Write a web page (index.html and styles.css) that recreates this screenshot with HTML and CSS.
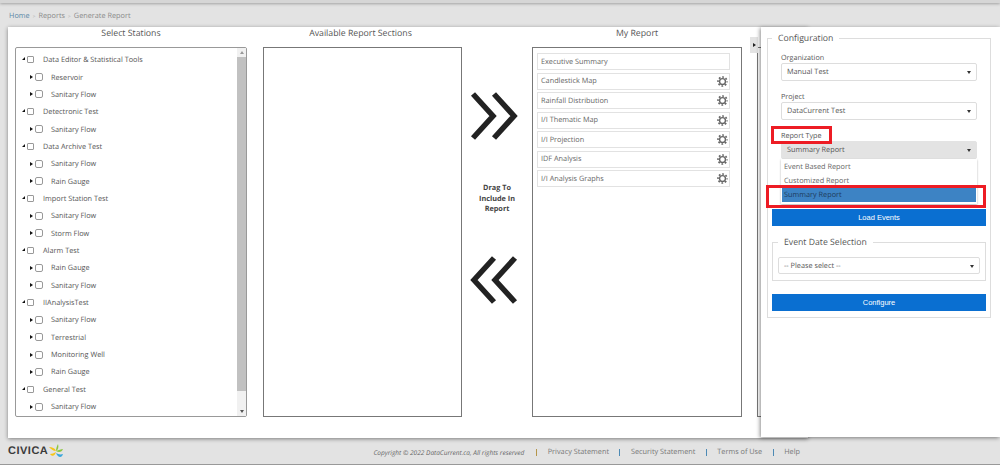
FILE: index.html
```html
<!DOCTYPE html>
<html lang="en">
<head>
    <meta charset="UTF-8">
    <title>Generate Report</title>
    <link rel="stylesheet" href="styles.css">
</head>
<body>
    <div class="topbar"></div>
    <div class="breadcrumb">
        <a class="crumb-home">Home</a><span class="sep">&gt;</span><span>Reports</span><span class="sep">&gt;</span><span>Generate Report</span>
    </div>

    <div class="card">
        <div class="col col-stations">
            <h3>Select Stations</h3>
            <div class="box tree">
                <div class="tree-list">
                    <div class="node root"><i class="arrow open"></i><i class="check"></i><span>Data Editor &amp; Statistical Tools</span></div>
                    <div class="node"><i class="arrow"></i><i class="check"></i><span>Reservoir</span></div>
                    <div class="node"><i class="arrow"></i><i class="check"></i><span>Sanitary Flow</span></div>
                    <div class="node root"><i class="arrow open"></i><i class="check"></i><span>Detectronic Test</span></div>
                    <div class="node"><i class="arrow"></i><i class="check"></i><span>Sanitary Flow</span></div>
                    <div class="node root"><i class="arrow open"></i><i class="check"></i><span>Data Archive Test</span></div>
                    <div class="node"><i class="arrow"></i><i class="check"></i><span>Sanitary Flow</span></div>
                    <div class="node"><i class="arrow"></i><i class="check"></i><span>Rain Gauge</span></div>
                    <div class="node root"><i class="arrow open"></i><i class="check"></i><span>Import Station Test</span></div>
                    <div class="node"><i class="arrow"></i><i class="check"></i><span>Sanitary Flow</span></div>
                    <div class="node"><i class="arrow"></i><i class="check"></i><span>Storm Flow</span></div>
                    <div class="node root"><i class="arrow open"></i><i class="check"></i><span>Alarm Test</span></div>
                    <div class="node"><i class="arrow"></i><i class="check"></i><span>Rain Gauge</span></div>
                    <div class="node"><i class="arrow"></i><i class="check"></i><span>Sanitary Flow</span></div>
                    <div class="node root"><i class="arrow open"></i><i class="check"></i><span>IIAnalysisTest</span></div>
                    <div class="node"><i class="arrow"></i><i class="check"></i><span>Sanitary Flow</span></div>
                    <div class="node"><i class="arrow"></i><i class="check"></i><span>Terrestrial</span></div>
                    <div class="node"><i class="arrow"></i><i class="check"></i><span>Monitoring Well</span></div>
                    <div class="node"><i class="arrow"></i><i class="check"></i><span>Rain Gauge</span></div>
                    <div class="node root"><i class="arrow open"></i><i class="check"></i><span>General Test</span></div>
                    <div class="node"><i class="arrow"></i><i class="check"></i><span>Sanitary Flow</span></div>
                </div>
                <div class="scrollbar">
                    <i class="scroll-up"></i>
                    <div class="scroll-thumb"></div>
                    <i class="scroll-down"></i>
                </div>
            </div>
        </div>

        <div class="col col-available">
            <h3>Available Report Sections</h3>
            <div class="box"></div>
        </div>

        <div class="col-drag">
            <svg class="chevrons" viewBox="0 0 50 50"><path d="M4 3 L24 25 L4 47 M25 3 L45 25 L25 47"/></svg>
            <div class="drag-text">Drag To<br>Include In<br>Report</div>
            <svg class="chevrons" viewBox="0 0 50 50"><path d="M25 3 L5 25 L25 47 M46 3 L26 25 L46 47"/></svg>
        </div>

        <div class="col col-report">
            <h3>My Report</h3>
            <div class="box report-list">
                <div class="section-row">Executive Summary</div>
                <div class="section-row">Candlestick Map<svg class="gear"><use href="#gear"/></svg></div>
                <div class="section-row">Rainfall Distribution<svg class="gear"><use href="#gear"/></svg></div>
                <div class="section-row">I/I Thematic Map<svg class="gear"><use href="#gear"/></svg></div>
                <div class="section-row">I/I Projection<svg class="gear"><use href="#gear"/></svg></div>
                <div class="section-row">IDF Analysis<svg class="gear"><use href="#gear"/></svg></div>
                <div class="section-row">I/I Analysis Graphs<svg class="gear"><use href="#gear"/></svg></div>
            </div>
        </div>

        <div class="col-hidden">
            <div class="toggle"><i class="toggle-arrow"></i></div>
            <div class="box"></div>
        </div>
    </div>

    <aside class="panel">
        <fieldset class="config">
            <legend>Configuration</legend>
            <label>Organization</label>
            <div class="select">Manual Test<i></i></div>
            <label>Project</label>
            <div class="select">DataCurrent Test<i></i></div>
            <label>Report Type</label>
            <div class="select open">Summary Report<i></i></div>
            <button class="btn load-btn">Load Events</button>
            <fieldset class="events">
                <legend>Event Date Selection</legend>
                <div class="select">-- Please select --<i></i></div>
            </fieldset>
            <button class="btn">Configure</button>

            <div class="dropdown">
                <div>Event Based Report</div>
                <div>Customized Report</div>
                <div class="selected">Summary Report</div>
            </div>
        </fieldset>
        <div class="mark mark-label"></div>
        <div class="mark mark-option"></div>
    </aside>

    <footer class="footer">
        <div class="logo">
            <span>CIVICA</span>
            <svg class="logo-mark" viewBox="0 0 14 14">
                <path d="M7 7 C7 4 8 2 9 0 C10 3 9 6 7 7Z" fill="#8cc63f"/>
                <path d="M7 7 C4 7 2 5 0 3 C3 3 6 4 7 7Z" fill="#f5c518"/>
                <path d="M7 7 C10 6 12 5 14 5 C13 8 10 9 7 7Z" fill="#8cc63f"/>
                <path d="M7 8 C5 9 3 10 1 10 C3 13 6 12 7 8Z" fill="#f5c518"/>
                <path d="M7 9 C9 10 11 11 14 10 C13 14 9 14 7 9Z" fill="#3aa7dc"/>
            </svg>
        </div>
        <div class="footer-links">
            <em>Copyright &copy; 2022 DataCurrent.ca, All rights reserved</em>
            <i class="bar bar-gold"></i><a>Privacy Statement</a>
            <i class="bar bar-blue"></i><a>Security Statement</a>
            <i class="bar bar-blue"></i><a>Terms of Use</a>
            <i class="bar bar-blue"></i><a>Help</a>
        </div>
    </footer>

    <svg class="defs" width="0" height="0">
        <symbol id="gear" viewBox="0 0 24 24">
            <circle cx="12" cy="12" r="9.8" fill="none" stroke="#666" stroke-width="3.4" stroke-dasharray="3.85 3.85" stroke-dashoffset="1.92"/>
            <circle cx="12" cy="12" r="6.4" fill="none" stroke="#666" stroke-width="3"/>
        </symbol>
    </svg>
</body>
</html>
```
FILE: styles.css
```css
* { box-sizing: border-box; }

html, body {
    margin: 0;
    height: 465px;
    overflow: hidden;
}
body {
    position: relative;
    background: #e3e3e3;
    font-family: "Open Sans", Arial, sans-serif;
    font-size: 7.3px;
    color: #555;
    text-rendering: geometricPrecision;
}

.topbar {
    height: 3px;
    background: #d6d6d6;
    box-shadow: 0 1px 3px rgba(0,0,0,0.3);
}
.breadcrumb {
    height: 24px;
    padding: 8px 0 0 9px;
    font-size: 7.3px;
    line-height: 11px;
    color: #8a8a8a;
}
.crumb-home { color: #5b88a8; }
.sep { margin: 0 3px; font-size: 5px; color: #aaa; }

.card {
    display: flex;
    width: 800px;
    height: 411px;
    margin-left: 8px;
    padding: 0 0 0 7px;
    background: #fff;
    box-shadow: 0 1px 4px rgba(0,0,0,0.45);
    overflow: hidden;
}
.col { display: flex; flex-direction: column; }
.col h3 {
    height: 20px;
    margin: 0;
    font-size: 8.75px;
    font-weight: 400;
    line-height: 12px;
    text-align: center;
    color: #555;
}
.box {
    height: 370px;
    border: 1px solid #777;
    background: #fff;
}
.col-stations { width: 232px; margin-right: 16px; }
.col-available { width: 199px; }
.col-available h3 { padding-right: 4px; }
.col-report { width: 210px; }

.tree {
    display: flex;
    border-color: #999;
    border-radius: 2px;
}
.tree-list { flex: 1; padding-top: 3px; }
.node {
    display: flex;
    align-items: center;
    height: 17.35px;
    padding-left: 14px;
    font-size: 7.3px;
    color: #555;
}
.node span { padding-top: 1px; }
.node.root { padding-left: 6px; }
.node .check {
    width: 8px;
    height: 8px;
    margin: 0 8px 0 2px;
    border: 1px solid #999;
    border-radius: 2px;
    background: #fff;
}
.node.root .check { width: 7px; height: 7px; margin-right: 9px; border-radius: 1px; }

.arrow {
    width: 0;
    height: 0;
    border-left: 3px solid #111;
    border-top: 2px solid transparent;
    border-bottom: 2px solid transparent;
}
.arrow.open {
    border-left: 3px solid transparent;
    border-top: 0;
    border-bottom: 3px solid #111;
    margin-top: -2px;
}

.scrollbar {
    display: flex;
    flex-direction: column;
    align-items: center;
    width: 9px;
    background: #f1f1f1;
}
.scroll-up, .scroll-down {
    flex: none;
    width: 0;
    height: 0;
    margin: 3px 0;
    border-left: 2.5px solid transparent;
    border-right: 2.5px solid transparent;
}
.scroll-up { border-bottom: 3px solid #999; }
.scroll-down { border-top: 3px solid #555; }
.scroll-thumb { flex: 1; width: 100%; margin-bottom: 16px; background: #c1c1c1; }

.col-drag {
    display: flex;
    flex-direction: column;
    align-items: center;
    width: 70px;
    padding-top: 64px;
}
.chevrons { width: 50px; height: 50px; margin-left: -6px; }
.chevrons path { fill: none; stroke: #222; stroke-width: 5.5; }
.drag-text {
    margin: 42px 0 40px;
    font-size: 7.3px;
    font-weight: 700;
    line-height: 10.5px;
    text-align: center;
    color: #444;
}

.report-list { padding: 5px 11px 0 4px; }
.section-row {
    display: flex;
    align-items: center;
    justify-content: space-between;
    height: 17px;
    margin-bottom: 2.5px;
    padding: 0 0 0 3px;
    border: 1px solid #e2e2e2;
    font-size: 7.3px;
    color: #666;
}
.gear { width: 11px; height: 11px; margin-right: 1px; }
.defs { position: absolute; }

.col-hidden { margin-left: 15px; padding-top: 20px; position: relative; flex: 1; }
.col-hidden .box { width: 40px; }
.toggle {
    position: absolute;
    left: -7px;
    top: 10px;
    width: 8px;
    height: 16px;
    background: #e3e3e3;
}
.toggle-arrow {
    position: absolute;
    left: 3px;
    top: 6px;
    border-left: 3px solid #222;
    border-top: 2px solid transparent;
    border-bottom: 2px solid transparent;
}

/* slide out panel sits over the card */
.panel {
    position: absolute;
    left: 761px;
    top: 27px;
    width: 239px;
    height: 410px;
    padding: 5px 9px 0 6px;
    background: #fff;
    box-shadow: -1px 1px 4px rgba(0,0,0,0.45);
}
fieldset {
    margin: 0;
    min-width: 0;
    border: 1px solid #ddd;
}
legend {
    padding: 0 6px;
    font-size: 8.7px;
    line-height: 12px;
    color: #555;
}
.config {
    position: relative;
    height: 286px;
    padding: 8px 4px 0 4px;
}
.config label {
    display: block;
    height: 11px;
    margin: 0 0 0 9px;
    font-size: 7.2px;
    line-height: 13px;
    color: #555;
}
.select {
    position: relative;
    height: 18px;
    margin: 0 9px 10px 9px;
    padding-left: 5px;
    border: 1px solid #ddd;
    border-radius: 2px;
    background: #fff;
    font-size: 7.3px;
    line-height: 17px;
    color: #555;
}
.select i {
    position: absolute;
    right: 5px;
    top: 7px;
    border-top: 3px solid #333;
    border-left: 2.5px solid transparent;
    border-right: 2.5px solid transparent;
}
.select.open { background: #e3e3e3; border-color: #e3e3e3; }

.btn {
    display: block;
    width: 214px;
    height: 17px;
    border: 0;
    background: #0a6fd1;
    color: #fff;
    font-family: "Liberation Sans", Arial, sans-serif;
    font-size: 7.5px;
}
.load-btn { margin-top: 50px; }
.events {
    height: 45px;
    margin: 10px 0 13px;
    padding: 0 5px;
}
.events .select { height: 17px; margin: 9px 0 0 0; line-height: 16px; }

.dropdown {
    position: absolute;
    left: 13px;
    top: 115px;
    width: 196px;
    height: 45px;
    padding: 1px 1px 0;
    background: #fff;
    box-shadow: 0 1px 2px rgba(0,0,0,0.3);
    font-size: 7.3px;
    line-height: 15.5px;
}
.dropdown div { height: 14px; padding-left: 2px; color: #666; }
.dropdown .selected { background: #3d83c4; color: #1d3b5c; }

.mark {
    position: absolute;
    border: 3px solid #ed1c24;
}
.mark-label { left: 10px; top: 99px; width: 61px; height: 18px; }
.mark-option { left: 5px; top: 158px; width: 220px; height: 23px; }

.footer {
    display: flex;
    align-items: center;
    justify-content: space-between;
    height: 27px;
    padding: 0 200px 0 8px;
    border-bottom: 1px solid #999;
}
.logo { display: flex; align-items: center; gap: 1px; }
.logo span {
    font-family: "Liberation Sans", Arial, sans-serif;
    font-size: 11px;
    font-weight: 700;
    letter-spacing: 0.5px;
    color: #3a3a3a;
}
.logo-mark { width: 14px; height: 14px; }
.footer-links { display: flex; align-items: center; padding-top: 2px; font-size: 7.3px; color: #777; }
.footer-links em { font-size: 6.5px; color: #666; }
.bar { width: 1px; height: 7px; margin: 0 10.5px; }
.bar-gold { margin-left: 12px; background: #b5964a; }
.bar-blue { background: #4d8ab5; }
```
